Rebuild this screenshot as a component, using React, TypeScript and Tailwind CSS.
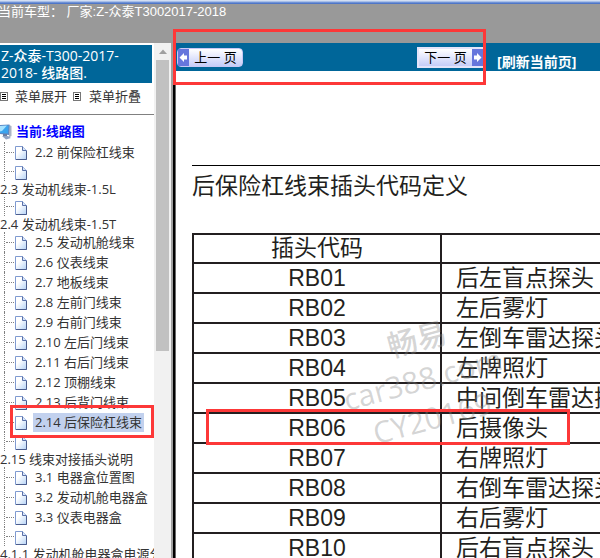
import { useState } from 'react'
import clsx from 'clsx'

type TreeNode = { kind: 'leaf' | 'blank' | 'label'; text?: string }

const TREE: TreeNode[] = [
  { kind: 'leaf', text: '2.2 前保险杠线束' },
  { kind: 'blank' },
  { kind: 'label', text: '2.3 发动机线束-1.5L' },
  { kind: 'blank' },
  { kind: 'label', text: '2.4 发动机线束-1.5T' },
  { kind: 'leaf', text: '2.5 发动机舱线束' },
  { kind: 'leaf', text: '2.6 仪表线束' },
  { kind: 'leaf', text: '2.7 地板线束' },
  { kind: 'leaf', text: '2.8 左前门线束' },
  { kind: 'leaf', text: '2.9 右前门线束' },
  { kind: 'leaf', text: '2.10 左后门线束' },
  { kind: 'leaf', text: '2.11 右后门线束' },
  { kind: 'leaf', text: '2.12 顶棚线束' },
  { kind: 'leaf', text: '2.13 后背门线束' },
  { kind: 'leaf', text: '2.14 后保险杠线束' },
  { kind: 'blank' },
  { kind: 'label', text: '2.15 线束对接插头说明' },
  { kind: 'leaf', text: '3.1 电器盒位置图' },
  { kind: 'leaf', text: '3.2 发动机舱电器盒' },
  { kind: 'leaf', text: '3.3 仪表电器盒' },
  { kind: 'blank' },
  { kind: 'label', text: '4.1.1 发动机舱电器盒电源分配' },
]

const CONNECTORS = [
  { code: 'RB01', name: '后左盲点探头' },
  { code: 'RB02', name: '左后雾灯' },
  { code: 'RB03', name: '左倒车雷达探头' },
  { code: 'RB04', name: '左牌照灯' },
  { code: 'RB05', name: '中间倒车雷达探头' },
  { code: 'RB06', name: '后摄像头' },
  { code: 'RB07', name: '右牌照灯' },
  { code: 'RB08', name: '右倒车雷达探头' },
  { code: 'RB09', name: '右后雾灯' },
  { code: 'RB10', name: '后右盲点探头' },
]

const MARKED_CODE = 'RB06'

const uiFont = "font-['Open_Sans','Noto_Sans_CJK_SC',sans-serif]"
const docFont = "font-['Liberation_Sans','Noto_Sans_CJK_SC',sans-serif]"

export default function App() {
  const [selected, setSelected] = useState('2.14 后保险杠线束')

  return (
    <div className={clsx('flex h-screen flex-col overflow-hidden bg-white text-[13px]', uiFont)}>
      {/* Top bar */}
      <header className="h-[43px] shrink-0 bg-[#999999]">
        <div className="h-1 bg-linear-to-b from-[#d3dff3] from-25% via-[#7f9fdc] via-50% to-[#3f68c0]" />
        <p className={clsx('-ml-0.5 whitespace-pre leading-4 text-white', docFont)}>当前车型： 厂家:Z-众泰T3002017-2018</p>
      </header>

      <div className="flex min-h-0 flex-1">
        <Sidebar selected={selected} onSelect={setSelected} />
        <Document />
      </div>
    </div>
  )
}

function Sidebar({ selected, onSelect }: { selected: string; onSelect: (s: string) => void }) {
  return (
    <aside className="flex w-[176px] shrink-0">
      <div className="min-w-0 flex-1 overflow-hidden whitespace-nowrap pt-0.5 text-[#333333]">
        <h1 className="mr-0.5 h-[38px] bg-[#006699] px-px pt-0.5 text-sm font-medium leading-[17px] text-white">
          Z-众泰-T300-2017-
          <br />
          2018- 线路图.
        </h1>
        <div className="flex h-8 items-center border-b border-[#808080] pb-1">
          <MenuIcon />
          <button className="ml-[7px]">菜单展开</button>
          <MenuIcon className="ml-1.5" />
          <button className="ml-2">菜单折叠</button>
        </div>

        <div className="mt-[7px] flex h-5 items-center">
          <ComputerIcon />
          <a href="#root" className="ml-1 font-bold text-[#0000ff]">当前:线路图</a>
        </div>
        <ul>
          {TREE.map((node, i) => {
            if (node.kind === 'label') {
              return <li key={i} className="h-4 leading-[17px]">{node.text}</li>
            }
            return (
              <li key={i} className={clsx('relative flex items-center', node.kind === 'leaf' ? 'h-5' : 'h-[19px]')}>
                <TreeLine />
                <PageIcon />
                {node.text && (
                  <a
                    href="#page"
                    onClick={() => onSelect(node.text!)}
                    className={clsx('ml-1.5 px-0.5 leading-[19px]', node.text === selected && 'bg-[#c2d1ee]')}
                  >
                    {node.text}
                  </a>
                )}
                {node.text === selected && (
                  <span className="pointer-events-none absolute -top-[7px] left-2.5 z-10 h-[33px] w-36 border-3 border-[#fd3838]" />
                )}
              </li>
            )
          })}
        </ul>
      </div>

      {/* Scrollbar */}
      <div className="flex w-[17px] flex-col items-center bg-[#f1f1f1]" aria-hidden="true">
        <svg className="my-1.5 h-[5px] w-2" viewBox="0 0 8 5">
          <path d="M4 0.5 L8 5 H0 Z" fill="#a0a0a0" />
        </svg>
        <div className="h-[291px] w-[13px] bg-[#c1c1c1]" />
      </div>
      <div className="w-0.5 bg-[#a0a0a0]" />
      <div className="w-0.5 bg-black" />
      <div className="w-px bg-[#696969]" />
    </aside>
  )
}

function Document() {
  return (
    <main className="flex min-w-0 flex-1 flex-col">
      <nav className="relative flex h-7 shrink-0 items-center bg-[#006699]">
        <button className="ml-px flex h-[19px] w-[66px] shrink-0 items-stretch rounded-sm border border-[#c8c8f4] bg-linear-to-b from-white to-[#c6cdf8] text-[13px] text-black">
          <ArrowIcon className="rotate-180" />
          <span className="flex-1 whitespace-pre text-center leading-[17px]">上一 页</span>
        </button>
        <button className="ml-[174px] flex h-[21px] w-[68px] shrink-0 items-stretch border-2 border-[#e4e4fa] bg-linear-to-b from-white to-[#c6cdf8] text-[13px] text-black">
          <span className="flex-1 whitespace-pre text-center leading-[17px]">下一 页</span>
          <ArrowIcon />
        </button>
        <a href="#refresh" className="ml-3 shrink-0 pt-2.5 text-sm font-bold leading-[18px] text-white">[刷新当前页]</a>
        <span className="pointer-events-none absolute -left-[3px] -top-3.5 z-10 h-14 w-[313px] border-3 border-[#fd3838]" />
      </nav>

      <div className={clsx('relative min-h-0 flex-1 overflow-hidden pl-4 text-[23px] text-[#231f20]', docFont)}>
        <h2 className="mt-[94px] whitespace-nowrap border-t border-black pt-1 font-normal leading-8">
          后保险杠线束插头代码定义
        </h2>
        <table className="mt-[31px] w-[520px] table-fixed border-collapse whitespace-nowrap">
          <thead>
            <tr className="h-[29px]">
              <th className="w-[248px] border-2 border-[#231f20] p-0 font-normal leading-[27px]">插头代码</th>
              <th className="border-2 border-[#231f20] p-0" />
            </tr>
          </thead>
          <tbody>
            {CONNECTORS.map((c) => (
              <tr key={c.code} className="h-[30px]">
                <td className="relative border-2 border-[#231f20] p-0 text-center leading-7">
                  {c.code}
                  {c.code === MARKED_CODE && (
                    <span className="pointer-events-none absolute -top-[5px] left-3 z-10 h-9 w-[364px] border-3 border-[#fd3838]" />
                  )}
                </td>
                <td className="border-2 border-[#231f20] py-0 pl-3.5 pr-0 leading-7">{c.name}</td>
              </tr>
            ))}
          </tbody>
        </table>

        {/* Watermark */}
        <div className={clsx('pointer-events-none absolute left-[165px] top-[246px] w-[180px] -rotate-15 text-[30px] font-medium leading-10 text-[#858585]/35', uiFont)}>
          <p className="pl-14">畅易</p>
          <p>car388.com</p>
          <p className="pl-5">CY20169</p>
        </div>
      </div>
    </main>
  )
}

function TreeLine() {
  return (
    <span className="ml-1 flex w-[11px] shrink-0 items-center self-stretch border-l border-dotted border-[#808080]" aria-hidden="true">
      <span className="ml-px w-2 border-t border-dotted border-[#808080]" />
    </span>
  )
}

function PageIcon() {
  return (
    <svg className="mt-0.5 h-[14px] w-3 shrink-0" viewBox="0 0 12 14" aria-hidden="true">
      <defs>
        <linearGradient id="page" x1="0" y1="0" x2="1" y2="1">
          <stop offset="0.35" stopColor="#ffffff" />
          <stop offset="1" stopColor="#b4d2f6" />
        </linearGradient>
      </defs>
      <path d="M0.5 0.5 H7.5 L11.5 4.5 V13.5 H0.5 Z" fill="url(#page)" stroke="#7f9ad0" />
      <path d="M7.5 0.5 V4.5 H11.5" fill="#d8e6fa" stroke="#5a70a8" />
      <path d="M11.5 5 V13.5 H1" fill="none" stroke="#4a5c8c" />
    </svg>
  )
}

function MenuIcon({ className }: { className?: string }) {
  return (
    <svg className={clsx('h-[9px] w-2 shrink-0', className)} viewBox="0 0 8 9" aria-hidden="true">
      <rect x="0.5" y="0.5" width="7" height="8" fill="#fff" stroke="#777" />
      <path d="M2 2.5 H6 M2 4.5 H6 M2 6.5 H6" stroke="#000" />
    </svg>
  )
}

function ComputerIcon() {
  return (
    <svg className="h-4 w-3 shrink-0" viewBox="0 0 12 16" aria-hidden="true">
      <path d="M9 1 L11.5 2 V12 L9 13.5 Z" fill="#a9b4c4" />
      <path d="M0 1 L9.5 0.5 L9 11 L0 10 Z" fill="#5f86c0" />
      <path d="M0 2 L8.5 1.5 L8 9.5 L0 9 Z" fill="#3aa4ee" />
      <path d="M0 2 L7 1.6 L2 7 L0 7.5 Z" fill="#a5e2ff" />
      <path d="M3 10 H7 V12 H3 Z" fill="#6c7ea0" />
      <path d="M2 12 L8 12 L11 14 L6 15.5 Z" fill="#93a5c5" />
    </svg>
  )
}

function ArrowIcon({ className }: { className?: string }) {
  return (
    <svg className={clsx('h-full w-[11px] shrink-0', className)} viewBox="0 0 11 17" preserveAspectRatio="none" aria-hidden="true">
      <rect width="11" height="17" fill="#6676dc" />
      <path d="M2 6.5 H5 V4 L9.5 8.5 L5 13 V10.5 H2 Z" fill="#fff" />
    </svg>
  )
}
